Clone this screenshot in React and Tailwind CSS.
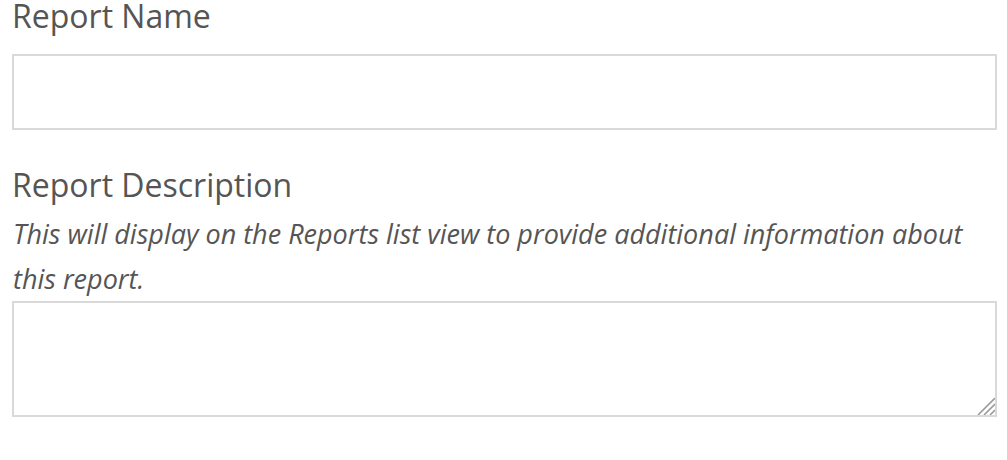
export default function App() {
  return (
    <div className="w-[1007px] h-[460px] bg-white pl-[12px] pr-[10px]" style={{ fontFamily: '"Open Sans", sans-serif' }}>
      <label className="block text-[32px] leading-[32px] text-[#555555]">Report Name</label>
      <input type="text" className="block mt-[22px] w-full h-[76px] border-2 border-[#d9d9d9] bg-white outline-none" />
      <label className="block mt-[39px] text-[32px] leading-[32px] text-[#555555]">Report Description</label>
      <p className="mt-[10px] pl-[1px] text-[27px] leading-[45px] italic text-[#555555]">
        This will display on the Reports list view to provide additional information about this report.
      </p>
      <div className="relative">
        <textarea className="block w-full h-[116px] border-2 border-[#d9d9d9] bg-white outline-none resize-none" />
        <svg className="absolute right-[2px] bottom-[2px]" width="22" height="22" viewBox="0 0 22 22">
          <g stroke="#9a9a9a" strokeWidth="1.6">
            <line x1="22" y1="5" x2="5" y2="22" />
            <line x1="22" y1="11" x2="11" y2="22" />
            <line x1="22" y1="17" x2="17" y2="22" />
          </g>
        </svg>
      </div>
    </div>
  );
}
